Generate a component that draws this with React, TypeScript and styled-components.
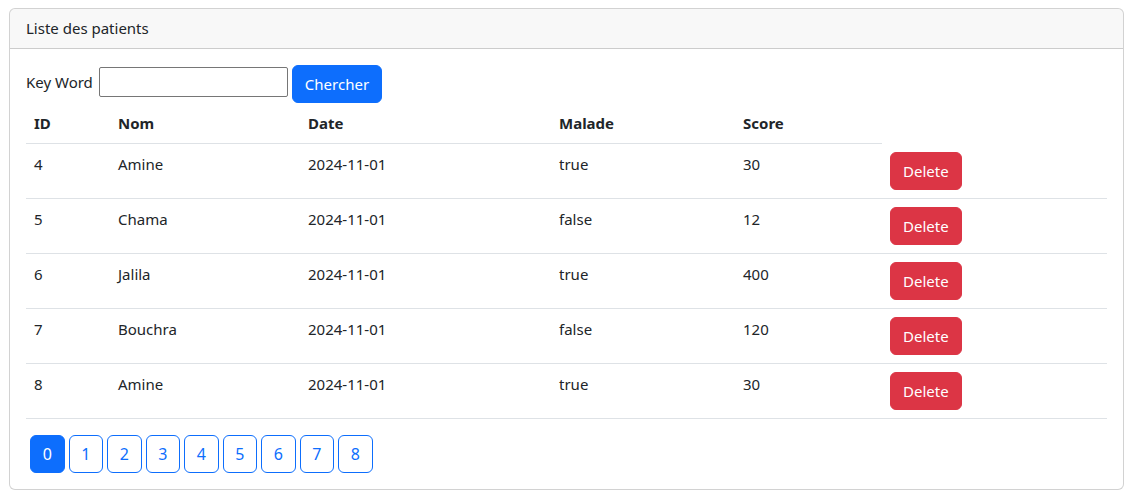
import React from "react";
import styled, { createGlobalStyle } from "styled-components";

const Global = createGlobalStyle`
  html, body { margin: 0; padding: 0; background: #fff; }
  body {
    font-family: "Noto Sans", "Open Sans", sans-serif;
    font-size: 16px;
    line-height: 24px;
    color: #212529;
  }
  * { box-sizing: border-box; }
`;

const Page = styled.div`
  padding: 8px 11px 0 9px;
`;

const Card = styled.div`
  border: 1px solid rgba(0, 0, 0, 0.175);
  border-radius: 6px;
  background: #fff;
`;

const CardHeader = styled.div`
  padding: 8px 16px;
  background: rgba(33, 37, 41, 0.03);
  border-bottom: 1px solid rgba(0, 0, 0, 0.175);
  border-radius: 5px 5px 0 0;
  line-height: 23px;
  font-size: 15px;
`;

const CardBody = styled.div`
  padding: 16px;
`;

const SearchForm = styled.form`
  display: flex;
  align-items: center;
  gap: 4px;
  height: 38px;
`;

const Label = styled.label`
  font-size: 15px;
  margin: 0 2px 4px 0;
`;

const TextInput = styled.input`
  width: 189px;
  height: 30px;
  margin-bottom: 4px;
  border: 1px solid #767676;
  border-radius: 2px;
  padding: 1px 2px;
  font: inherit;
`;

const Button = styled.button<{ $variant: "primary" | "danger" | "outline" }>`
  display: inline-flex;
  align-items: center;
  justify-content: center;
  height: 38px;
  padding: 6px 12px;
  font-family: inherit;
  font-size: 15px;
  line-height: 24px;
  border-radius: 6px;
  cursor: pointer;
  border: 1px solid
    ${(p) => (p.$variant === "danger" ? "#dc3545" : "#0d6efd")};
  background: ${(p) =>
    p.$variant === "danger" ? "#dc3545" : p.$variant === "primary" ? "#0d6efd" : "#fff"};
  color: ${(p) => (p.$variant === "outline" ? "#0d6efd" : "#fff")};
`;

const Table = styled.table`
  width: 100%;
  border-collapse: collapse;
  margin: 0 0 16px;
  vertical-align: top;
  font-size: 15px;
`;

const Th = styled.th<{ $w?: number }>`
  text-align: left;
  font-weight: 700;
  padding: 8px;
  border-bottom: 1px solid #dee2e6;
  width: ${(p) => (p.$w ? `${p.$w}px` : "auto")};
`;

const Td = styled.td`
  padding: 8px;
  border-bottom: 1px solid #dee2e6;
  vertical-align: top;
`;

const Pager = styled.ul`
  list-style: none;
  margin: 0;
  padding: 0;
  display: flex;
`;

const PageItem = styled.li`
  margin-left: 4px;
`;

const PageButton = styled(Button)`
  width: 34.5px;
  padding: 6px 0;
  font-size: 16px;
`;

const patients = [
  { id: 4, nom: "Amine", date: "2024-11-01", malade: "true", score: 30 },
  { id: 5, nom: "Chama", date: "2024-11-01", malade: "false", score: 12 },
  { id: 6, nom: "Jalila", date: "2024-11-01", malade: "true", score: 400 },
  { id: 7, nom: "Bouchra", date: "2024-11-01", malade: "false", score: 120 },
  { id: 8, nom: "Amine", date: "2024-11-01", malade: "true", score: 30 },
];

export default function App() {
  return (
    <Page>
      <Global />
      <Card>
        <CardHeader>Liste des patients</CardHeader>
        <CardBody>
          <SearchForm onSubmit={(e) => e.preventDefault()}>
            <Label>Key Word</Label>
            <TextInput type="text" />
            <Button $variant="primary" type="submit">
              Chercher
            </Button>
          </SearchForm>
          <Table>
            <thead>
              <tr>
                <Th $w={84}>ID</Th>
                <Th $w={190}>Nom</Th>
                <Th $w={251}>Date</Th>
                <Th $w={184}>Malade</Th>
                <Th $w={147}>Score</Th>
              </tr>
            </thead>
            <tbody>
              {patients.map((p) => (
                <tr key={p.id}>
                  <Td>{p.id}</Td>
                  <Td>{p.nom}</Td>
                  <Td>{p.date}</Td>
                  <Td>{p.malade}</Td>
                  <Td>{p.score}</Td>
                  <Td>
                    <Button $variant="danger">Delete</Button>
                  </Td>
                </tr>
              ))}
            </tbody>
          </Table>
          <Pager>
            {Array.from({ length: 9 }, (_, i) => (
              <PageItem key={i}>
                <PageButton $variant={i === 0 ? "primary" : "outline"}>{i}</PageButton>
              </PageItem>
            ))}
          </Pager>
        </CardBody>
      </Card>
    </Page>
  );
}
